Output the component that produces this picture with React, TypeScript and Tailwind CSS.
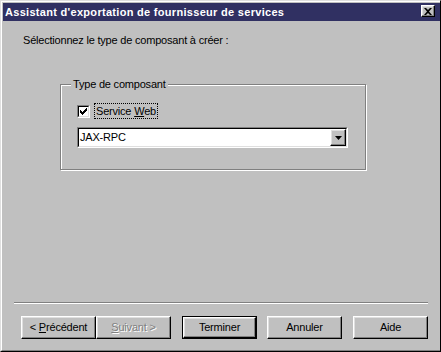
import React from 'react';

const raised =
  'border border-t-white border-l-white border-r-black border-b-black shadow-[inset_-1px_-1px_0_#808080,inset_1px_1px_0_#dfdfdf]';

const checkRows = ['......#', '.....##', '#...###', '##.###.', '#####..', '.###...', '..#....'];

const Button = ({ children, isDefault = false, disabled = false, className = '' }: { children: React.ReactNode; isDefault?: boolean; disabled?: boolean; className?: string }) => {
    const face = (
        <div className={`${raised} w-full h-full flex items-center justify-center bg-[#c0c0c0] ${disabled ? "text-[#808080] [text-shadow:1px_1px_0_#fff]" : ''}`}>
            <span className="whitespace-pre">{children}</span>
        </div>
    );
    if (isDefault) {
        return <div className={`w-[75px] h-[23px] border border-black ${className}`}>{face}</div>;
    }
    return <div className={`w-[75px] h-[23px] ${className}`}>{face}</div>;
};

export default function App() {
    return (
        <div className="w-[441px] h-[352px] bg-[#c0c0c0] border border-t-[#dfdfdf] border-l-[#dfdfdf] border-r-black border-b-black font-['Liberation_Sans',Arial,sans-serif] text-[11px] leading-[13px] tracking-[-0.2px] text-black select-none">
            <div className="h-full flex flex-col border-t border-l border-b border-t-white border-l-white border-b-[#808080] pl-px pt-px">
                {/* Title bar */}
                <div className="h-[18px] flex items-start justify-between bg-[#303062] pl-[2px] pr-[5px]">
                    <span className="text-white font-bold leading-[18px] tracking-[0.3px]">Assistant d'exportation de fournisseur de services</span>
                    <div className={`mt-[2px] w-[14px] h-[12px] bg-[#c0c0c0] ${raised} flex items-center justify-center`}>
                        <svg width="8" height="7" viewBox="0 0 8 7">
                            <path d="M0 0h2l2 2 2-2h2L5 3.5 8 7H6L4 5 2 7H0l3-3.5z" fill="#000" />
                        </svg>
                    </div>
                </div>

                {/* Body */}
                <div className="flex-1 flex flex-col">
                    <div className="ml-[20px] mt-[13px]">Sélectionnez le type de composant à créer :</div>

                    {/* Group box */}
                    <div className="relative ml-[57px] mt-[37px] w-[306px] h-[86px] border border-[#808080] shadow-[inset_1px_1px_0_#fff,1px_1px_0_#fff] pl-[16px] pt-[18px]">
                        <span className="absolute left-[10px] top-[-7px] px-[2px] bg-[#c0c0c0]">Type de composant</span>

                        <div className="flex items-center h-[16px]">
                            <div className="w-[13px] h-[13px] border border-t-[#808080] border-l-[#808080] border-r-white border-b-white">
                                <div className="w-full h-full bg-white border border-t-black border-l-black border-r-[#dfdfdf] border-b-[#dfdfdf] flex items-center justify-center">
                                    <svg width="7" height="7" viewBox="0 0 7 7" shapeRendering="crispEdges">
                                        {checkRows.map((row, y) =>
                                            row.split('').map((c, x) =>
                                                c === '#' ? <rect key={`${x}-${y}`} x={x} y={y} width="1" height="1" fill="#000" /> : null
                                            )
                                        )}
                                    </svg>
                                </div>
                            </div>
                            <div className="ml-[4px] h-[16px] flex items-center border border-dotted border-black px-px">
                                <span>
                                    Service <u className="underline-offset-1">W</u>eb
                                </span>
                            </div>
                        </div>

                        {/* Combo */}
                        <div className="mt-[8px] w-[271px] h-[21px] border border-t-[#808080] border-l-[#808080] border-r-white border-b-white">
                            <div className="w-full h-full bg-white border border-t-black border-l-black border-r-[#dfdfdf] border-b-[#dfdfdf] flex items-center justify-between">
                                <span className="pl-px">JAX-RPC</span>
                                <div className={`w-[16px] h-[17px] bg-[#c0c0c0] ${raised} flex items-center justify-center`}>
                                    <svg width="7" height="4" viewBox="0 0 7 4">
                                        <path d="M0 0h7L3.5 4z" fill="#000" />
                                    </svg>
                                </div>
                            </div>
                        </div>
                    </div>
                </div>

                {/* Bottom */}
                <div className="pb-[11px]">
                    <div className="ml-[11px] w-[414px] h-[2px] border-t border-b border-t-[#808080] border-b-white" />
                    <div className="mt-[12px] ml-[18px] flex">
                        <Button>
                            &lt; <u className="underline-offset-1">P</u>récédent
                        </Button>
                        <Button disabled>
                            <u className="underline-offset-1">S</u>uivant &gt;
                        </Button>
                        <Button isDefault className="ml-[11px]">Terminer</Button>
                        <Button className="ml-[10px]">Annuler</Button>
                        <Button className="ml-[11px]">Aide</Button>
                    </div>
                </div>
            </div>
        </div>
    );
}
